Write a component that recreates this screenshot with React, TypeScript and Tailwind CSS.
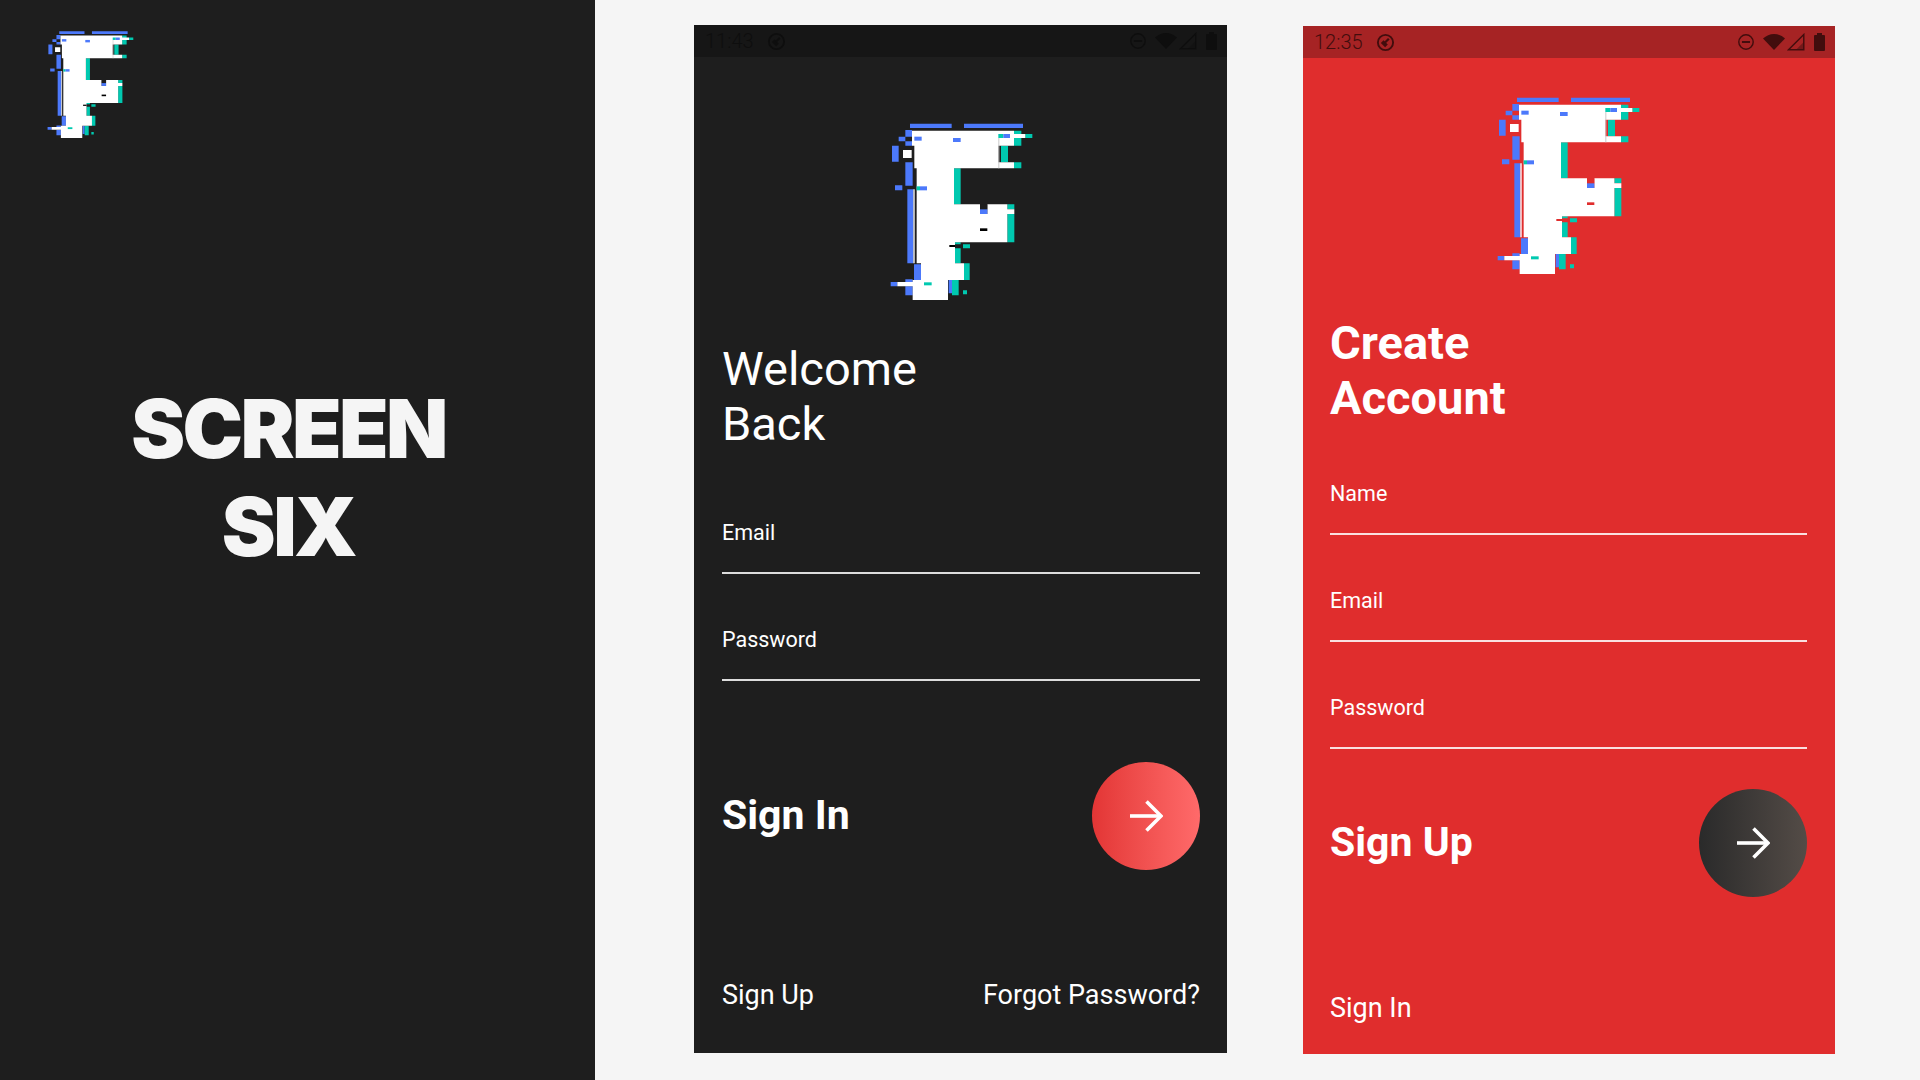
import React from "react";

const BLUE = "#4c79fb";
const TEAL = "#00c9b0";

type R = [number, number, number, number];

// everything is measured from the 510x600 crop of the logo
const whites: R[] = [
  [126, 62, 306, 45], [133, 107, 252, 68], [385, 157, 47, 18], [140, 175, 112, 108],
  [140, 283, 190, 114], [330, 312, 82, 85], [352, 283, 60, 29], [140, 397, 115, 63],
  [153, 460, 129, 50], [128, 510, 106, 60], [82, 516, 46, 13], [420, 72, 46, 12],
  [412, 298, 21, 14], [130, 238, 4, 222], [99, 120, 26, 24],
];
const blues: R[] = [
  [120, 41, 125, 13], [282, 41, 177, 13], [106, 60, 20, 20], [86, 80, 20, 14],
  [106, 94, 20, 13], [66, 107, 20, 48], [106, 157, 22, 70], [75, 226, 22, 15],
  [112, 238, 18, 222], [132, 463, 21, 47], [62, 516, 20, 13], [106, 508, 22, 8],
  [106, 529, 22, 27], [236, 510, 10, 40], [218, 404, 20, 7],
];
const teals: R[] = [
  [252, 175, 20, 108], [412, 283, 21, 15], [412, 312, 21, 85], [432, 62, 22, 45],
  [393, 107, 21, 50], [432, 157, 22, 18], [466, 72, 21, 12],
  [255, 415, 17, 45], [252, 397, 20, 6], [279, 403, 21, 12], [282, 460, 17, 50],
  [246, 510, 20, 46], [279, 541, 12, 12], [212, 404, 6, 7],
];

// one path per colour, separate rects leave hairline seams when scaled
const toPath = (rects: R[]) => rects.map(([x, y, w, h]) => `M${x} ${y}h${w}v${h}h${-w}z`).join("");

const Logo = ({ hole, className }: { hole: string; className: string }) => (
  <svg viewBox="0 0 510 600" className={className}>
    <path d={toPath(blues)} fill={BLUE} />
    <path d={toPath(teals)} fill={TEAL} />
    <path d={toPath(whites)} fill="#fff" />
    <rect x="330" y="283" width="22" height="15" fill={hole === "#000" ? "#1e1e1e" : hole} />
    <rect x="330" y="298" width="22" height="14" fill={BLUE} />
    <rect x="330" y="355" width="22" height="8" fill={hole} />
    <rect x="238" y="405" width="17" height="6" fill={hole} />
    <rect x="385" y="84" width="3" height="91" fill="#c9c9c9" />
    <rect x="133" y="80" width="22" height="12" fill={BLUE} />
    <rect x="249" y="84" width="23" height="12" fill={BLUE} />
    <rect x="150" y="229" width="21" height="12" fill={BLUE} />
    <rect x="140" y="229" width="10" height="12" fill={TEAL} />
    <rect x="385" y="72" width="15" height="12" fill={TEAL} />
    <rect x="400" y="72" width="20" height="12" fill={BLUE} />
    <rect x="162" y="517" width="23" height="9" fill={TEAL} />
  </svg>
);

const StatusBar = ({ time, bg, ink }: { time: string; bg: string; ink: string }) => (
  <div className={`flex items-center h-[32px] pl-[11px] pr-[10px] shrink-0 ${bg}`} style={{ color: ink }}>
    <span className="text-[20px] font-light leading-none w-[47px]">{time}</span>
    <svg viewBox="0 0 20 20" className="w-[19px] h-[19px] ml-[15px]" fill="none" stroke="currentColor" strokeWidth="2">
      <circle cx="10" cy="10" r="8" />
      <path d="M6.5 9l4.5 4.5" strokeWidth="4" />
      <path d="M9.5 10l4-4" strokeWidth="2.4" />
    </svg>
    <div className="flex items-center ml-auto">
      <svg viewBox="0 0 20 20" className="w-[18px] h-[18px]" fill="none" stroke="currentColor" strokeWidth="1.6">
        <circle cx="10" cy="10" r="8" />
        <path d="M5.5 10h9" strokeWidth="2.2" />
      </svg>
      <svg viewBox="0 0 22 16" className="w-[22px] h-[16px] ml-[8px]" fill="currentColor">
        <path d="M0 4.5C3 1.8 7 0 11 0s8 1.8 11 4.5L11 16z" />
      </svg>
      <svg viewBox="0 0 18 18" className="w-[18px] h-[18px] ml-[2px]" fill="none" stroke="currentColor" strokeWidth="1.4">
        <path d="M1.5 16.8L16.8 1.5v15.3z" />
        <path d="M9 16.8L16.8 9v7.8z" fill="currentColor" stroke="none" opacity="0.5" />
      </svg>
      <svg viewBox="0 0 11 18" className="w-[11px] h-[18px] ml-[9px]" fill="currentColor">
        <path d="M3 0h5v2h2a1 1 0 0 1 1 1v14a1 1 0 0 1-1 1H1a1 1 0 0 1-1-1V3a1 1 0 0 1 1-1h2z" />
      </svg>
    </div>
  </div>
);

const Field = ({ label, className }: { label: string; className: string }) => (
  <div className={`border-b-2 border-white/85 h-[53px] ${className}`}>
    <div className="text-[21.5px] leading-[24px] text-white">{label}</div>
  </div>
);

const ArrowBtn = ({ gradient }: { gradient: string }) => (
  <div className={`w-[108px] h-[108px] rounded-full flex items-center justify-center ${gradient}`}>
    <svg viewBox="0 0 34 34" className="w-[34px] h-[34px]" fill="none" stroke="#fff" strokeWidth="3.6">
      <path d="M1 17h30" />
      <path d="M17.5 2.5L32 17 17.5 31.5" />
    </svg>
  </div>
);

export default function App() {
  return (
    <div className="flex w-[1920px] h-[1080px] overflow-hidden bg-[#f5f5f5] [font-family:Roboto,sans-serif]">
      {/* Left title panel */}
      <aside className="w-[595px] shrink-0 bg-[#1e1e1e] pl-[35px] pt-[23px]">
        <Logo hole="#000" className="w-[103px] h-[121px]" />
        <h1 className="mt-[236px] w-[507px] text-center text-[#f5f5f5] font-black text-[81px] leading-[98px] tracking-[-2.6px] [font-family:Inter,sans-serif]">
          SCREEN
          <br />
          SIX
        </h1>
      </aside>

      {/* Sign in phone */}
      <section className="ml-[99px] mt-[25px] w-[533px] h-[1028px] bg-[#1e1e1e] flex flex-col">
        <StatusBar time="11:43" bg="bg-[#161616]" ink="#0e0e0e" />
        <div className="flex flex-col flex-1 pl-[28px] pr-[27px]">
          <Logo hole="#000" className="w-[170px] h-[200px] mt-[53px] ml-[148px]" />
          <h2 className="mt-[31px] text-[47px] leading-[55px] font-normal text-white">
            Welcome
            <br />
            Back
          </h2>
          <Field label="Email" className="mt-[70px]" />
          <Field label="Password" className="mt-[54px]" />
          <div className="flex items-center justify-between mt-[81px]">
            <span className="text-[41px] font-bold text-white">Sign In</span>
            <ArrowBtn gradient="bg-gradient-to-r from-[#e33535] to-[#ff6a6a]" />
          </div>
          <div className="flex justify-between mt-[109px] text-[27px] leading-[32px] text-white">
            <span>Sign Up</span>
            <span>Forgot Password?</span>
          </div>
        </div>
      </section>

      {/* Sign up phone */}
      <section className="ml-[76px] mt-[26px] w-[532px] h-[1028px] bg-[#e02d2d] flex flex-col">
        <StatusBar time="12:35" bg="bg-[#a62324]" ink="#420d0d" />
        <div className="flex flex-col flex-1 pl-[27px] pr-[28px]">
          <Logo hole="#e02d2d" className="w-[170px] h-[200px] mt-[26px] ml-[147px]" />
          <h2 className="mt-[31px] text-[47px] leading-[55px] font-bold text-white">
            Create
            <br />
            Account
          </h2>
          <Field label="Name" className="mt-[57px]" />
          <Field label="Email" className="mt-[54px]" />
          <Field label="Password" className="mt-[54px]" />
          <div className="flex items-center justify-between mt-[40px]">
            <span className="text-[41px] font-bold text-white">Sign Up</span>
            <ArrowBtn gradient="bg-gradient-to-r from-[#2a2a2a] to-[#544c47]" />
          </div>
          <div className="mt-[95px] text-[27px] leading-[32px] text-white">Sign In</div>
        </div>
      </section>
    </div>
  );
}
